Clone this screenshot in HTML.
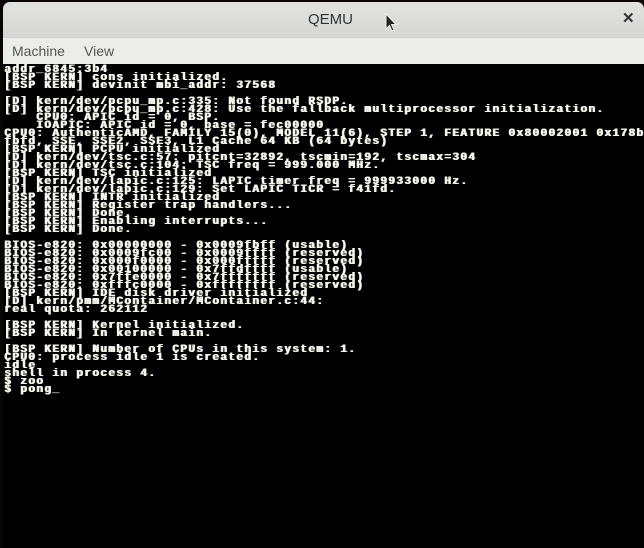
<!DOCTYPE html>
<html><head><meta charset="utf-8"><style>
html,body{margin:0;padding:0;}
body{width:644px;height:548px;background:#000;position:relative;overflow:hidden;font-family:"Liberation Sans",sans-serif;}
#frame{position:absolute;left:0;top:0;width:644px;height:548px;background:#0a0604;}
#title{position:absolute;left:3px;top:2px;width:641px;height:35px;background:linear-gradient(#e2e2e0,#d6d6d4);border-radius:7px 7px 0 0;}
#title .t{position:absolute;left:0;width:641px;top:9px;text-align:center;font-size:15px;color:#2e3436;padding-left:14px;box-sizing:border-box;}
#title .x{position:absolute;left:619px;top:7px;font-size:15px;color:#2e3436;font-weight:bold;}
#menu{position:absolute;left:3px;top:37px;width:641px;height:27px;background:#ececeb;border-top:1px solid #d0d0ce;box-sizing:border-box;}
#menu span{position:absolute;top:5px;font-size:14px;color:#555753;}
#term{position:absolute;left:3px;top:64px;width:641px;height:484px;background:#000;}
pre{position:absolute;left:4px;top:66px;margin:0;font-family:"Liberation Mono",monospace;font-weight:bold;font-size:11px;letter-spacing:1.4px;line-height:8px;color:#f4f4ec;white-space:pre;text-shadow:1px 0 0 #f4f4ec;}
#cursor{position:absolute;left:385px;top:13px;}
</style></head><body>
<div id="frame"></div>
<div id="title"><div class="t">QEMU</div><div class="x">✕</div></div>
<svg id="cursor" width="12" height="20" viewBox="0 0 12 20"><path d="M1 1 L1 16 L4.5 12.5 L7 18 L9 17 L6.5 11.5 L11 11.5 Z" fill="#222" stroke="#eee" stroke-width="1"/></svg>
<div id="menu"><span style="left:9px">Machine</span><span style="left:81px">View</span></div>
<div id="term"></div>
<pre>addr_6845:3b4
[BSP KERN] cons initialized.
[BSP KERN] devinit mbi_addr: 37568

[D] kern/dev/pcpu_mp.c:335: Not found RSDP.
[D] kern/dev/pcpu_mp.c:428: Use the fallback multiprocessor initialization.
    CPU0: APIC id = 0, BSP.
    IOAPIC: APIC id = 0, base = fec00000
CPU0: AuthenticAMD, FAMILY 15(0), MODEL 11(6), STEP 1, FEATURE 0x80002001 0x178b
fbfd, SSE, SSE2, SSE3, L1 Cache 64 KB (64 bytes)
[BSP KERN] PCPU initialized
[D] kern/dev/tsc.c:57: pitcnt=32892, tscmin=192, tscmax=304
[D] kern/dev/tsc.c:104: TSC freq = 999.000 MHz.
[BSP KERN] TSC initialized
[D] kern/dev/lapic.c:125: LAPIC timer freq = 999933000 Hz.
[D] kern/dev/lapic.c:129: Set LAPIC TICR = f41fd.
[BSP KERN] INTR initialized
[BSP KERN] Register trap handlers...
[BSP KERN] Done.
[BSP KERN] Enabling interrupts...
[BSP KERN] Done.

BIOS-e820: 0x00000000 - 0x0009fbff (usable)
BIOS-e820: 0x0009fc00 - 0x0009ffff (reserved)
BIOS-e820: 0x000f0000 - 0x000fffff (reserved)
BIOS-e820: 0x00100000 - 0x7ffdffff (usable)
BIOS-e820: 0x7ffe0000 - 0x7fffffff (reserved)
BIOS-e820: 0xfffc0000 - 0xffffffff (reserved)
[BSP KERN] IDE disk driver initialized
[D] kern/pmm/MContainer/MContainer.c:44:
real quota: 262112

[BSP KERN] Kernel initialized.
[BSP KERN] In kernel main.

[BSP KERN] Number of CPUs in this system: 1.
CPU0: process idle 1 is created.
idle
shell in process 4.
$ zoo
$ pong_</pre>
</body></html>
